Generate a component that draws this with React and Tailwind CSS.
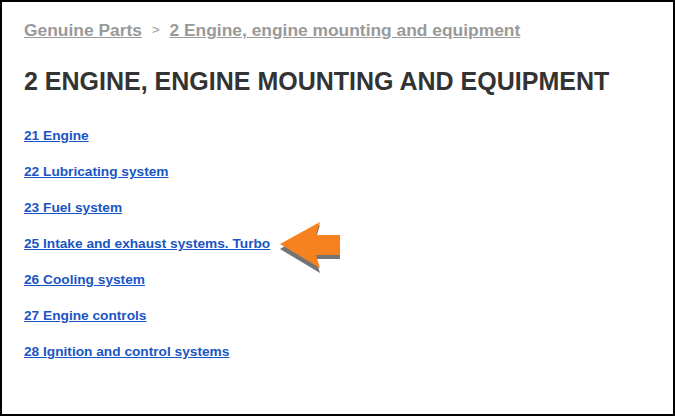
import React from 'react';

const sections = [
    '21 Engine',
    '22 Lubricating system',
    '23 Fuel system',
    '25 Intake and exhaust systems. Turbo',
    '26 Cooling system',
    '27 Engine controls',
    '28 Ignition and control systems',
];

function Arrow() {
    // annotation pointing at the Turbo link
    return (
        <svg className="absolute left-[276px] top-[217px]" width="66" height="56" viewBox="0 0 66 56">
            <polygon
                points="2,27 42,3 38,16 62,16 62,37 38,37 42,51"
                fill="#5c5c5c"
                transform="translate(0,3)"
                opacity="0.85"
            />
            <polygon points="2,25 42,3 38,16 62,16 62,36 38,36 42,49" fill="#f5821f" />
        </svg>
    );
}

export default function App() {
    return (
        <div className="relative w-[675px] h-[416px] border-2 border-black bg-white px-[22px] pt-[18px] font-['Liberation_Sans',Arial,sans-serif]">
            <div className="flex items-center text-[17.4px] leading-[20px] font-bold text-[#999999]">
                <a href="#" className="underline">Genuine Parts</a>
                <span className="mx-[10px] text-[13px] font-normal">&gt;</span>
                <a href="#" className="underline">2 Engine, engine mounting and equipment</a>
            </div>

            <h1 className="mt-[26px] text-[25px] leading-[30px] font-bold text-[#333333]">
                2 ENGINE, ENGINE MOUNTING AND EQUIPMENT
            </h1>

            <ul className="mt-[22px] flex flex-col">
                {sections.map((s, i) => (
                    <li key={i} className="text-[13.7px] leading-[36px] h-[36px]">
                        <a href="#" className="font-bold text-[#1a55c5] underline">{s}</a>
                    </li>
                ))}
            </ul>

            <Arrow />
        </div>
    );
}
